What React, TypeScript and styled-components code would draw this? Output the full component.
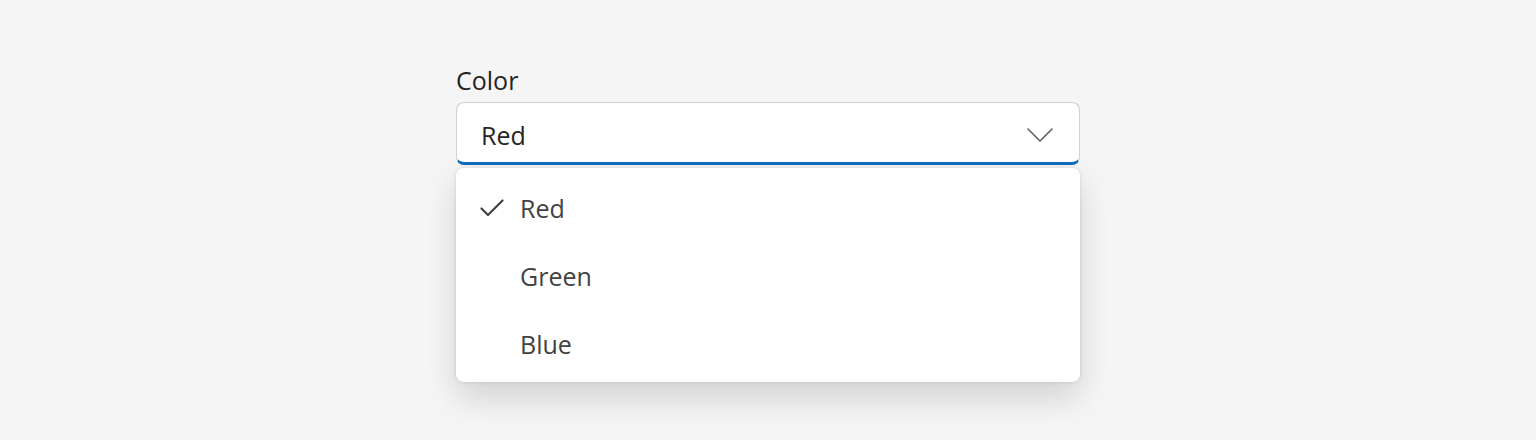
import React, { useState } from 'react';
import styled, { createGlobalStyle } from 'styled-components';

const GlobalStyle = createGlobalStyle`
  html, body {
    margin: 0;
    padding: 0;
    background: #f5f5f5;
    font-family: 'Open Sans', 'Noto Sans', sans-serif;
  }
`;

const Page = styled.div`
  display: flex;
  justify-content: center;
  padding-top: 62px;
  height: 440px;
  box-sizing: border-box;
`;

const Field = styled.div`
  display: flex;
  flex-direction: column;
  width: 624px;
`;

const Label = styled.label`
  font-size: 25px;
  line-height: 36px;
  color: #242424;
  margin-bottom: 4px;
`;

const Anchor = styled.div`
  position: relative;
`;

const Trigger = styled.button`
  display: flex;
  align-items: center;
  justify-content: space-between;
  width: 100%;
  height: 63px;
  padding: 4px 26px 0 24px;
  box-sizing: border-box;
  background: #ffffff;
  border: 1px solid #d1d1d1;
  border-bottom: 3px solid #0f6cbd;
  border-radius: 8px;
  font-family: inherit;
  font-size: 25px;
  color: #242424;
  cursor: pointer;
`;

const Listbox = styled.ul`
  position: absolute;
  top: calc(100% + 3px);
  left: 0;
  right: 0;
  margin: 0;
  padding: 6px 0 4px;
  list-style: none;
  background: #ffffff;
  border-radius: 8px;
  box-shadow: 0 0 4px rgba(0, 0, 0, 0.12), 0 16px 32px rgba(0, 0, 0, 0.14);
`;

const Option = styled.li<{ $selected?: boolean }>`
  display: flex;
  align-items: center;
  height: 68px;
  padding-left: 24px;
  gap: 16px;
  font-size: 25px;
  color: #424242;
  cursor: pointer;
`;

const CheckSlot = styled.span`
  display: flex;
  width: 24px;
  height: 24px;
  align-items: center;
  justify-content: center;
`;

function Chevron() {
  return (
    <svg width="26" height="14" viewBox="0 0 26 14" fill="none">
      <path d="M1 1 L13 13 L25 1" stroke="#616161" strokeWidth="1.6" strokeLinecap="round" strokeLinejoin="round" />
    </svg>
  );
}

function Check() {
  return (
    <svg width="24" height="18" viewBox="0 0 24 18" fill="none">
      <path d="M1.5 9.5 L8 16 L22.5 1.5" stroke="#424242" strokeWidth="2.2" strokeLinecap="round" strokeLinejoin="round" />
    </svg>
  );
}

const colors = ['Red', 'Green', 'Blue'];

export default function App() {
  const [value, setValue] = useState('Red');
  return (
    <>
      <GlobalStyle />
      <Page>
        <Field>
          <Label>Color</Label>
          <Anchor>
            <Trigger>
              <span>{value}</span>
              <Chevron />
            </Trigger>
            <Listbox>
              {colors.map((c) => (
                <Option key={c} $selected={c === value} onClick={() => setValue(c)}>
                  <CheckSlot>{c === value && <Check />}</CheckSlot>
                  {c}
                </Option>
              ))}
            </Listbox>
          </Anchor>
        </Field>
      </Page>
    </>
  );
}
